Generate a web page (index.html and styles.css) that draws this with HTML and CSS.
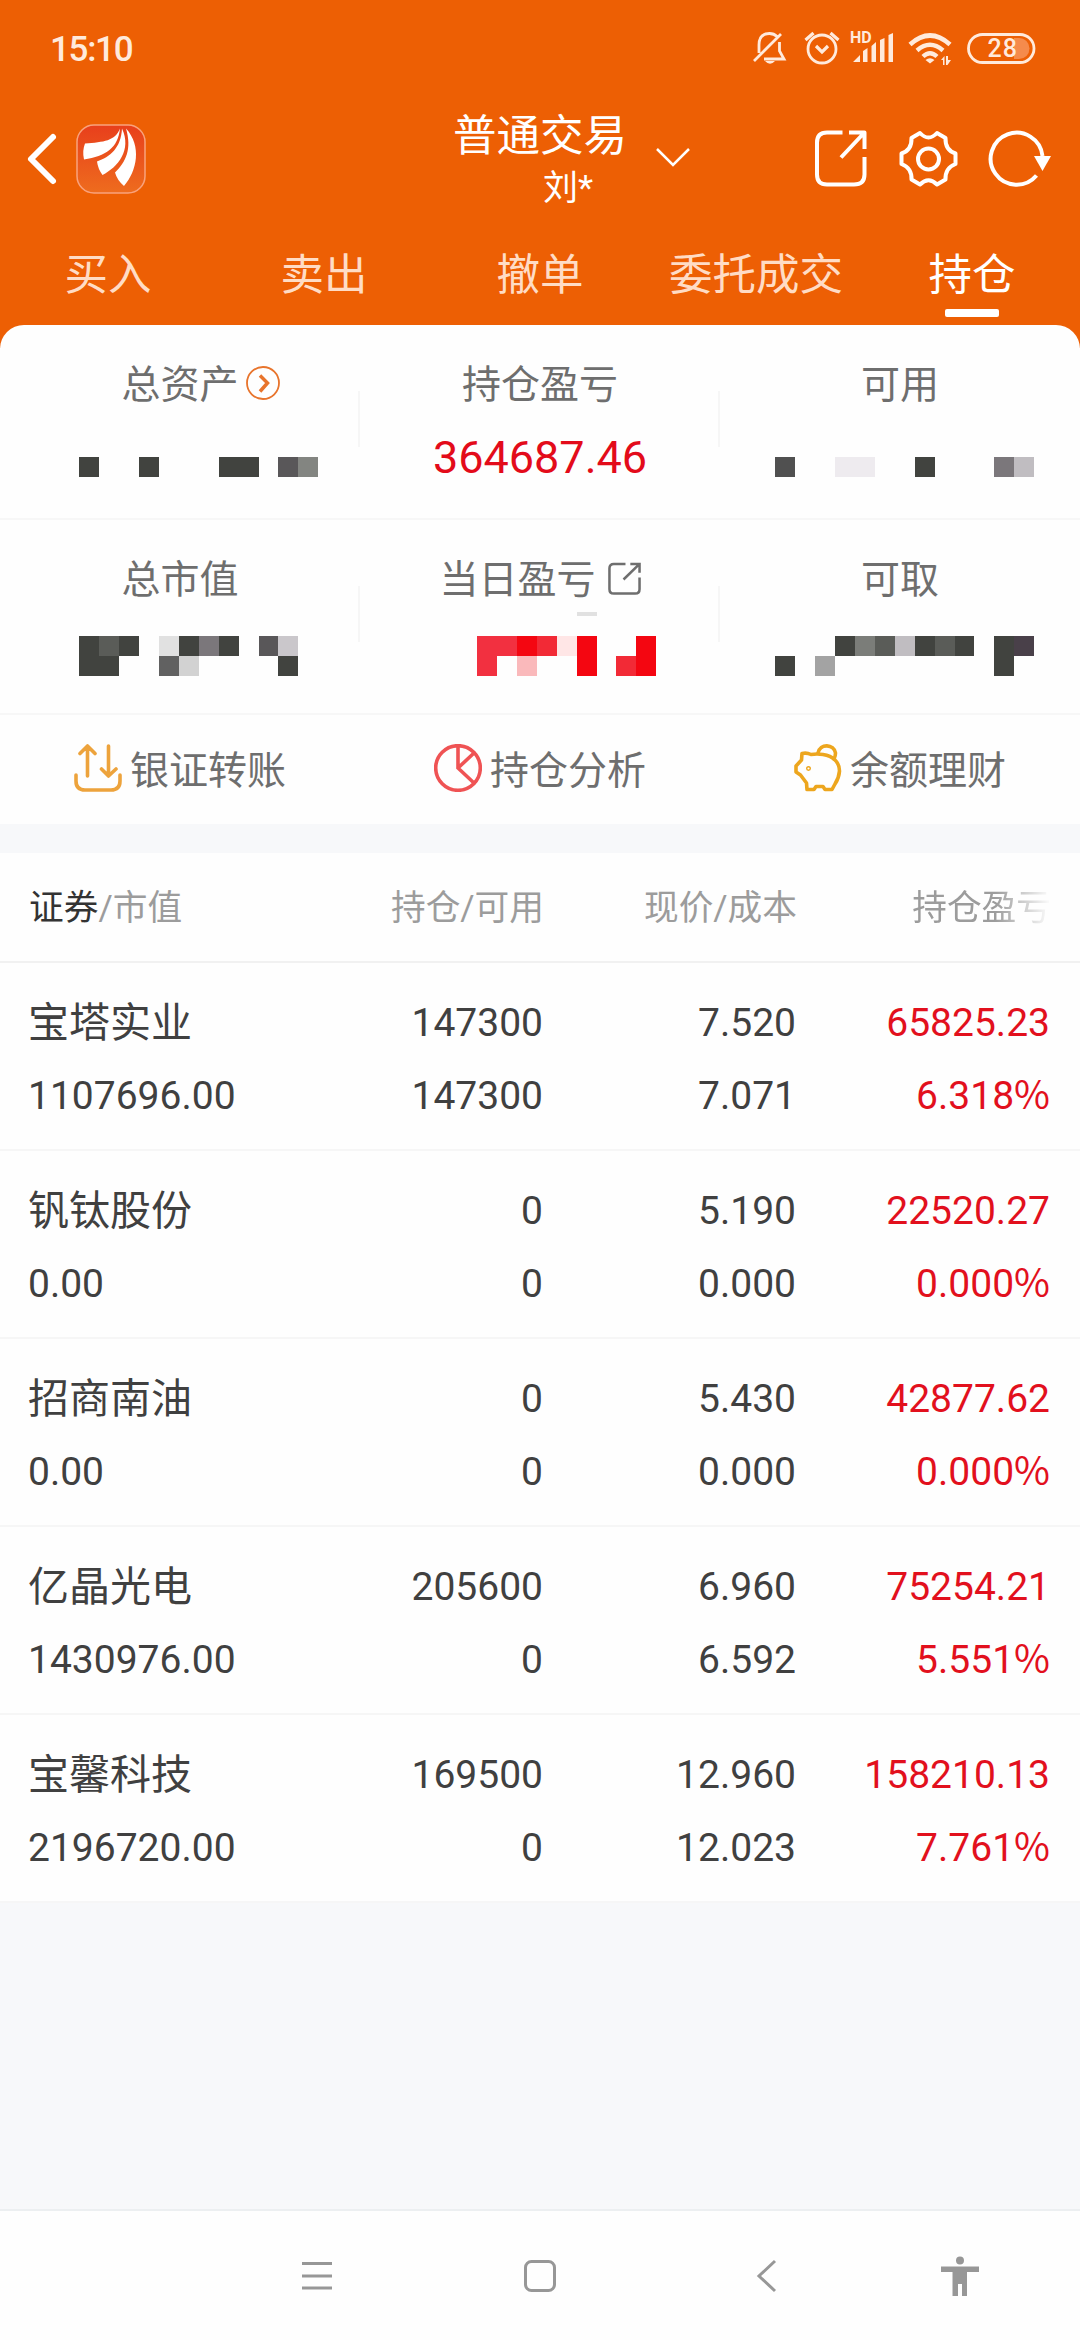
FILE: index.html
```html
<!DOCTYPE html>
<html lang="zh-CN">
<head>
    <meta charset="UTF-8">
    <meta name="viewport" content="width=device-width, initial-scale=1.0">
    <title>普通交易</title>
    <link rel="stylesheet" href="styles.css">
</head>
<body>
    <div class="header">
        <div class="status-bar">
            <span class="time">15:10</span>
            <!-- silent, alarm, signal, wifi, battery -->
            <svg class="status-icons" viewBox="750 25 290 46">
                <g fill="none" stroke="#ffeadc" stroke-width="2.8">
                    <path d="M759 53 V45 Q759 33.500 769.500 33.500 Q774 33.500 777 36.500 M779.500 42 V51 L784 59 H764 M754 61 L781 34"/>
                    <circle cx="822" cy="49" r="14"/>
                    <path d="M816 46 L822 52 L828 46 M805.500 40 L813.500 33 M838.500 40 L830.500 33" stroke-width="3.2"/>
                    <path d="M910 44.500 Q930 26.500 950 44.500" stroke-width="4.600"/>
                    <path d="M917 50.500 Q930 39 943 50.500" stroke-width="4.400"/>
                    <path d="M923 56.500 Q930 50 937 56.500" stroke-width="4.400"/>
                    <rect x="968.500" y="34.500" width="65.500" height="28" rx="14"/>
                </g>
                <g fill="#ffeadc">
                    <path d="M765 61 H775 Q770 66.500 765 61 Z"/>
                    <path d="M853 62 L860 55 V62 Z M863 51 L867.500 48 V62 H863 Z M871.500 46 L876 42 V62 H871.500 Z M880 40 L884.500 38 V62 H880 Z M888.500 35 L893 33 V62 H888.500 Z"/>
                    <path d="M925.500 60 Q930 56.500 934.500 60 L930 63.500 Z M941 60 L944.500 56 V65 H943 V60 Z M946 56 H948 V60 H951 L947.500 65 H946 Z"/>
                </g>
                <path d="M1014 38 H1019 A10.500 10.500 0 0 1 1019 59 H1014 Z" fill="#f58b4c"/>
                <text x="850" y="43" class="hd">HD</text>
                <text x="987.500" y="57" class="battery">28</text>
            </svg>
        </div>
        <div class="title-bar">
            <svg class="back" viewBox="0 0 32 54"><path d="M27 5 L5 27 L27 49"/></svg>
            <svg class="logo" viewBox="0 0 70 70">
                <defs>
                    <linearGradient id="logoFill" x1="0" y1="0" x2="0" y2="1">
                        <stop offset="0" stop-color="#e83f1c"/>
                        <stop offset="1" stop-color="#ee6c1e"/>
                    </linearGradient>
                </defs>
                <rect x="1" y="1" width="68" height="68" rx="17" fill="url(#logoFill)" stroke="#f9a27c" stroke-width="1.500"/>
                <path fill="#fff" d="M44 4.500 C39 17 28 18 9 19.500 Q6 27 8 35.500 C30 32 42 24 44 4.500 Z"/>
                <path fill="#fff" d="M46 4.500 C45 24 34 33 21 37.500 Q22 45 26.500 51 C42 43 56 26 46 4.500 Z"/>
                <path fill="#fff" d="M50 4.500 C56 25 50 38 39 48.500 Q41 56 48 62 C61 47 66 22 50 4.500 Z"/>
            </svg>
            <div class="account">
                <div class="account-type">普通交易</div>
                <div class="account-name">刘*</div>
            </div>
            <svg class="arrow-down" viewBox="0 0 34 20"><path d="M1 2 L17 18 L33 2"/></svg>
            <div class="tools">
                <svg class="tool" viewBox="0 0 60 60"><path d="M29.500 3.500 H14 Q4 3.500 4 13.500 V45.500 Q4 55.500 14 55.500 H41 Q51.500 55.500 51.500 45.500 V28 M36 3.500 H51.500 V20 M51 4 L28 28.500"/></svg>
                <svg class="tool gear" viewBox="0 0 60 60">
                    <path d="M21 4 Q29.500 13 38 4 L46.500 9 Q46 21 56.500 24.500 V35 Q46 39 46.500 50.500 L38 55.500 Q29.500 47 21 55.500 L12.500 50.500 Q13 39 2.500 35 V24.500 Q13 21 12.500 9 Z"/>
                    <circle cx="29.500" cy="30" r="10.500"/>
                </svg>
                <svg class="tool refresh" viewBox="0 0 60 60">
                    <path d="M48.500 46.500 A26 26 0 1 1 54.500 27"/>
                    <path d="M46 27 H63 L54.500 42 Z" class="solid"/>
                </svg>
            </div>
        </div>
        <div class="tabs">
            <div class="tab">买入</div>
            <div class="tab">卖出</div>
            <div class="tab">撤单</div>
            <div class="tab">委托成交</div>
            <div class="tab active">持仓</div>
        </div>
    </div>

    <div class="summary">
        <div class="summary-row">
            <div class="cell">
                <div class="label">总资产
                    <svg class="more" viewBox="0 0 34 34"><circle cx="17" cy="17" r="16"/><path d="M14 9.500 L21.500 17 L14 25.500"/></svg>
                </div>
                <svg class="mosaic" viewBox="0 0 360 64">
                    <g fill="#41433f"><path d="M79 41h20v20h-20z M139 41h20v20h-20z M219 41h40v20h-40z"/></g>
                    <path fill="#595759" d="M278 41h20v20h-20z"/>
                    <path fill="#838581" d="M298 41h20v20h-20z"/>
                </svg>
            </div>
            <div class="cell">
                <div class="label">持仓盈亏</div>
                <div class="amount">364687.46</div>
            </div>
            <div class="cell">
                <div class="label">可用</div>
                <svg class="mosaic" viewBox="0 0 360 64">
                    <path fill="#505050" d="M55 41h20v20h-20z"/>
                    <path fill="#eeebef" d="M115 41h40v20h-40z"/>
                    <path fill="#41433f" d="M195 41h20v20h-20z"/>
                    <path fill="#7b777b" d="M274 41h20v20h-20z"/>
                    <path fill="#c0bdc1" d="M294 41h20v20h-20z"/>
                </svg>
            </div>
        </div>
        <div class="summary-row">
            <div class="cell">
                <div class="label">总市值</div>
                <svg class="mosaic" viewBox="0 0 360 64">
                    <path fill="#41433f" d="M79 25h20v20h20v20h-40z M119 25h20v20h-20z M179 25h20v20h-20z M219 25h20v20h-20z M278 45h20v20h-20z"/>
                    <path fill="#5a5c58" d="M99 25h20v20h-20z"/>
                    <path fill="#e1e1e1" d="M159 25h20v20h-20z"/>
                    <path fill="#7b777b" d="M199 25h20v20h-20z"/>
                    <path fill="#595759" d="M259 25h20v20h-20z"/>
                    <path fill="#cac7cb" d="M278 25h20v20h-20z"/>
                    <path fill="#616161" d="M159 45h20v20h-20z"/>
                    <path fill="#d2d2d2" d="M179 45h20v20h-20z"/>
                </svg>
            </div>
            <div class="cell">
                <div class="label">当日盈亏
                    <svg class="share" viewBox="0 0 34 34"><path d="M18 2 H6 Q1.500 2 1.500 6.500 V28 Q1.500 32.500 6 32.500 H28 Q32.500 32.500 32.500 28 V16 M23 2 H32.500 V11 M32 2.500 L16 18"/></svg>
                </div>
                <svg class="mosaic" viewBox="0 0 360 64">
                    <path fill="#e1e1e1" d="M217 1h20v4h-20z"/>
                    <path fill="#f23040" d="M117 25h40v20h-20v20h-20z"/>
                    <path fill="#f40611" d="M157 25h20v20h-20z M217 25h20v40h-20z M276 25h20v40h-20z"/>
                    <path fill="#f22a36" d="M177 25h20v20h-20z M256 45h20v20h-20z"/>
                    <path fill="#ffe6e6" d="M197 25h20v20h-20z"/>
                    <path fill="#fab9bb" d="M157 45h20v20h-20z"/>
                </svg>
            </div>
            <div class="cell">
                <div class="label">可取</div>
                <svg class="mosaic" viewBox="0 0 360 64">
                    <path fill="#41433f" d="M55 45h20v20h-20z M115 25h20v20h-20z M195 25h20v20h-20z M234 25h20v20h-20z M274 25h20v40h-20z"/>
                    <path fill="#a3a3a3" d="M95 45h20v20h-20z"/>
                    <path fill="#7b7d79" d="M135 25h20v20h-20z"/>
                    <path fill="#5a5c58" d="M155 25h20v20h-20z M215 25h20v20h-20z"/>
                    <path fill="#c0bdc1" d="M175 25h20v20h-20z"/>
                    <path fill="#494049" d="M294 25h20v20h-20z"/>
                </svg>
            </div>
        </div>
        <div class="actions">
            <div class="action">
                <svg class="action-icon orange" viewBox="0 0 48 48"><path d="M2 31 V37 Q2 46 11 46 H37 Q46 46 46 37 V31 M13.500 32 V3 M6 9.500 L13.500 2 L21 9.500 M34.500 2 V31 M27.500 25 L34.500 32 L42 25"/></svg>
                <span>银证转账</span>
            </div>
            <div class="action">
                <svg class="action-icon red" viewBox="0 0 48 48"><circle cx="24" cy="24" r="22.300"/><path d="M24 2 V24 L40 9 M24 24 L40 39"/></svg>
                <span>持仓分析</span>
            </div>
            <div class="action">
                <svg class="action-icon yellow" viewBox="0 0 48 48">
                    <path d="M8 9.500 Q13 8.500 17 10.500 Q23 9.500 29 10.500 C39 12 45.500 18 45.500 27 Q45 34 41 40 L38 45.500 H31 L29 42.500 H22 L20 45.500 H13 L12.500 39 L6.500 31 L2 28 V22 L7.500 16 Z"/>
                    <path d="M24 9 C26 -1 40 0 41.500 9 Q41.500 12 40 15"/>
                    <circle cx="14.500" cy="24.500" r="0.700"/>
                </svg>
                <span>余额理财</span>
            </div>
        </div>
    </div>

    <div class="positions">
        <div class="row row-head">
            <div><b>证券</b>/市值</div>
            <div>持仓/可用</div>
            <div>现价/成本</div>
            <div class="fade">持仓盈亏</div>
        </div>
        <div class="row">
            <div><span class="name">宝塔实业</span><span>1107696.00</span></div>
            <div><span>147300</span><span>147300</span></div>
            <div><span>7.520</span><span>7.071</span></div>
            <div class="up"><span>65825.23</span><span>6.318<i>%</i></span></div>
        </div>
        <div class="row">
            <div><span class="name">钒钛股份</span><span>0.00</span></div>
            <div><span>0</span><span>0</span></div>
            <div><span>5.190</span><span>0.000</span></div>
            <div class="up"><span>22520.27</span><span>0.000<i>%</i></span></div>
        </div>
        <div class="row">
            <div><span class="name">招商南油</span><span>0.00</span></div>
            <div><span>0</span><span>0</span></div>
            <div><span>5.430</span><span>0.000</span></div>
            <div class="up"><span>42877.62</span><span>0.000<i>%</i></span></div>
        </div>
        <div class="row">
            <div><span class="name">亿晶光电</span><span>1430976.00</span></div>
            <div><span>205600</span><span>0</span></div>
            <div><span>6.960</span><span>6.592</span></div>
            <div class="up"><span>75254.21</span><span>5.551<i>%</i></span></div>
        </div>
        <div class="row">
            <div><span class="name">宝馨科技</span><span>2196720.00</span></div>
            <div><span>169500</span><span>0</span></div>
            <div><span>12.960</span><span>12.023</span></div>
            <div class="up"><span>158210.13</span><span>7.761<i>%</i></span></div>
        </div>
    </div>

    <div class="nav-bar">
        <svg class="nav-icon" viewBox="0 0 42 42"><path d="M6 8.500 H36 M6 21 H36 M6 33 H36"/></svg>
        <svg class="nav-icon" viewBox="0 0 42 42"><rect x="6.500" y="6.500" width="29" height="29" rx="6"/></svg>
        <svg class="nav-icon" viewBox="0 0 42 42"><path d="M29 6 L13 21 L29 36"/></svg>
        <svg class="nav-icon" viewBox="0 0 42 42"><path class="solid" d="M2 11.500 H40 V17 H28 V41 H23 V29 H19 V41 H13.500 V17 H2 Z M21 1.500 A4 4 0 0 1 21 9.500 A4 4 0 0 1 21 1.500 Z"/></svg>
    </div>
</body>
</html>
```

FILE: styles.css
```css
* {
    box-sizing: border-box;
}
body {
    margin: 0;
    width: 1080px;
    height: 2340px;
    display: flex;
    flex-direction: column;
    font-family: Roboto, "Noto Sans CJK SC", sans-serif;
    background: #f7f8fa;
    color: #404040;
    overflow: hidden;
}
svg {
    display: block;
    flex: none;
}

/* header */
.header {
    height: 348px;
    background: #ed5f04;
    color: #fff;
}
.status-bar {
    height: 96px;
    padding: 0 40px 0 50px;
    display: flex;
    align-items: center;
    justify-content: space-between;
}
.time {
    font-size: 35px;
    font-weight: 500;
    letter-spacing: -1.3px;
    color: #ffeadc;
    padding-top: 3px;
}
.status-icons {
    width: 290px;
    height: 46px;
}
.hd {
    font-size: 16px;
    font-weight: 700;
    fill: #ffeadc;
}
.battery {
    font-size: 25px;
    font-weight: 500;
    letter-spacing: 1px;
    fill: #ffeadc;
}
.title-bar {
    height: 126px;
    display: flex;
    align-items: center;
    padding: 0 32px 0 26px;
}
.back {
    width: 32px;
    height: 54px;
    margin-right: 18px;
}
.back path {
    fill: none;
    stroke: #fff;
    stroke-width: 6;
    stroke-linecap: round;
    stroke-linejoin: round;
}
.logo {
    width: 70px;
    height: 70px;
}
.account {
    width: 180px;
    margin-left: 304px;
    padding-top: 6px;
    text-align: center;
}
.account-type {
    font-size: 43.5px;
    line-height: 54px;
}
.account-name {
    font-size: 35px;
    line-height: 50px;
    margin-left: 93px;
    text-align: left;
}
.arrow-down {
    width: 34px;
    height: 20px;
    margin-left: 26px;
    margin-bottom: 5px;
}
.arrow-down path {
    fill: none;
    stroke: #fff;
    stroke-width: 2.5;
}
.tools {
    margin-left: auto;
    display: flex;
}
.tool {
    width: 60px;
    height: 60px;
    fill: none;
    stroke: #fff;
    stroke-width: 4;
    stroke-linejoin: round;
    overflow: visible;
}
.gear {
    margin-left: 26px;
}
.refresh {
    margin-left: 29px;
}
.tool .solid {
    fill: #fff;
    stroke: none;
}
.tabs {
    display: flex;
}
.tab {
    flex: 1;
    height: 102px;
    line-height: 107px;
    text-align: center;
    font-size: 43.5px;
    color: #ffdcc5;
    white-space: nowrap;
}
.tab.active {
    color: #fff;
    position: relative;
}
.tab.active::after {
    content: "";
    position: absolute;
    left: 81px;
    top: 87px;
    width: 54px;
    height: 8px;
    border-radius: 2px;
    background: #fff;
}

/* account summary */
.summary {
    margin-top: -23px;
    height: 499px;
    background: #fefefe;
    border-radius: 24px 24px 0 0;
    color: #6e6e6e;
    font-size: 39px;
}
.summary-row {
    display: flex;
    height: 195px;
    border-bottom: 2px solid #f7f7f7;
}
.cell {
    width: 360px;
    position: relative;
    padding-top: 30px;
}
.cell:not(:last-child)::after {
    content: "";
    position: absolute;
    right: 0;
    top: 66px;
    width: 2px;
    height: 56px;
    background: #f6f6f6;
}
.label {
    height: 61px;
    line-height: 61px;
    display: flex;
    justify-content: center;
    align-items: center;
}
.more {
    width: 34px;
    height: 34px;
    margin: 0 -41px 5px 7px;
    fill: none;
    stroke: #e8742c;
    stroke-width: 1.8;
}
.more path {
    stroke-width: 3.5;
}
.share {
    width: 33px;
    height: 33px;
    margin: 0 0 4px 12px;
    fill: none;
    stroke: #6e6e6e;
    stroke-width: 2.6;
}
.mosaic {
    width: 360px;
    height: 64px;
    overflow: visible;
    shape-rendering: crispEdges;
}
.amount {
    font-size: 45px;
    line-height: 84px;
    text-align: center;
    color: #e30b1a;
}
.actions {
    display: flex;
    height: 106px;
}
.action {
    width: 360px;
    display: flex;
    align-items: center;
    justify-content: center;
    gap: 8px;
}
.action span {
    padding-bottom: 3px;
}
.action-icon {
    width: 48px;
    height: 48px;
    fill: none;
    stroke-width: 3.6;
    stroke-linecap: round;
    stroke-linejoin: round;
}
.orange {
    stroke: #eda33c;
}
.red {
    stroke: #ef5354;
}
.yellow {
    stroke: #eda61e;
}

/* positions table */
.positions {
    margin-top: 29px;
    background: #fefefe;
    font-size: 39px;
}
.row {
    display: grid;
    grid-template-columns: 300px 215px 253px 254px;
    height: 188px;
    padding: 24px 0 0 28px;
    border-bottom: 2px solid #f6f6f6;
    text-align: right;
}
.row div:first-child {
    text-align: left;
}
.row span {
    display: block;
    height: 73px;
    line-height: 73px;
}
.row .name {
    font-size: 41px;
}
/* wider percent sign */
.row i {
    font-family: "Noto Sans CJK SC", sans-serif;
    font-style: normal;
    line-height: 1;
}
.up {
    color: #e2101d;
}
.row-head {
    height: 110px;
    padding-top: 0;
    padding-left: 29px;
    line-height: 110px;
    font-size: 34.7px;
    color: #9c9c9c;
    border-color: #f1f1f1;
}
.row-head b {
    font-weight: 400;
    color: #333;
}
.fade {
    -webkit-mask-image: linear-gradient(to right, #000 78%, transparent 100%);
    mask-image: linear-gradient(to right, #000 78%, transparent 100%);
}

/* system navigation */
.nav-bar {
    margin-top: auto;
    height: 131px;
    padding-left: 296px;
    border-top: 2px solid #eceff1;
    background: #fefefe;
    display: flex;
    align-items: center;
}
.nav-icon {
    width: 42px;
    height: 42px;
    fill: none;
    stroke: #979797;
    stroke-width: 3;
}
.nav-icon:nth-child(2) {
    margin-left: 181px;
}
.nav-icon:nth-child(3) {
    margin-left: 185px;
}
.nav-icon:nth-child(4) {
    margin-left: 151px;
}
.nav-icon .solid {
    fill: #979797;
    stroke: none;
}
```
